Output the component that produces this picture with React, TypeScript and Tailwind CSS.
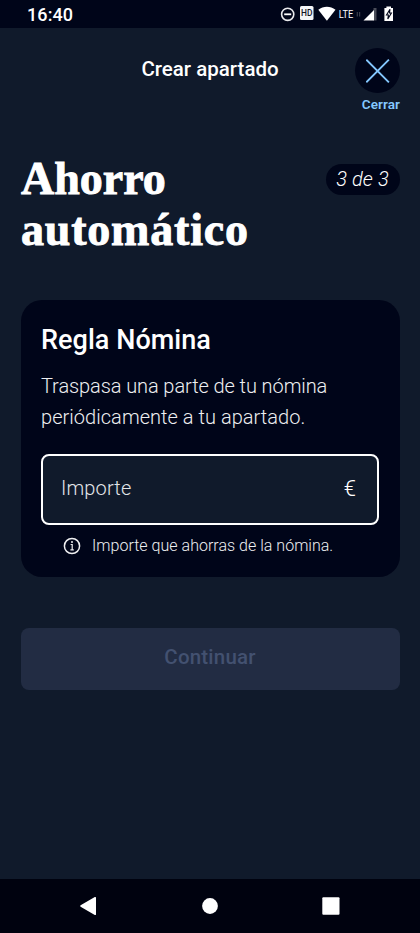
// App.tsx
import { useState } from 'react'

function StatusBar() {
  return (
    <div className="flex h-7 items-center justify-between bg-[#000519] pl-[27px] pr-[24px] text-white">
      <span className="text-[18px] leading-7 font-medium tracking-[0.1px] pt-px">16:40</span>
      <svg width="116" height="28" viewBox="280 0 116 28" fill="none">
        <circle cx="287.7" cy="14.3" r="6.1" stroke="#e8e9ec" strokeWidth="1.6" />
        <path d="M284.2 14.3h7" stroke="#fff" strokeWidth="1.8" />
        <rect x="300" y="6" width="13.5" height="14" rx="1.5" fill="#f4f5f7" />
        <text x="306.8" y="16.2" textAnchor="middle" fontSize="9" fontWeight="500" fill="#10141f" textLength="11.4" lengthAdjust="spacingAndGlyphs">HD</text>
        <path d="M318.3 9.7c5-3.9 12.2-3.9 17.2 0l-8.6 11z" fill="#fff" />
        <text x="338.8" y="18.3" fontSize="11.5" fill="#fff" textLength="14.5" lengthAdjust="spacingAndGlyphs">LTE</text>
        <path d="M357.3 12v4.5M359.6 12v4.5" stroke="#3a3d4b" strokeWidth="1.2" />
        <path d="M373.5 8h3v12.5h-3z" fill="#4a4d59" />
        <path d="M363.5 20.5L374 10V20.5z" fill="#fff" />
        <path d="M386.4 6.4h4.6v1.500h2v13h-8.600v-13h2z" fill="#fff" />
        <path d="M390 9.2l-3.500 5.800h1.900l-.6 4 3.600-6h-1.900z" stroke="#000519" strokeWidth="1.1" />
      </svg>
    </div>
  )
}

function Header() {
  return (
    <header className="grid grid-cols-[100px_1fr_100px] px-5 pt-5 text-white">
      <span />
      <h1 className="pt-[7px] text-center text-[20.5px] leading-7 font-medium whitespace-nowrap">
        Crear apartado
      </h1>
      <button className="flex flex-col items-end">
        <span className="flex size-[45px] items-center justify-center rounded-full bg-[#000519]">
          <svg width="24" height="24" viewBox="0 0 24 24" fill="none" stroke="#85c8ff" strokeWidth="1.9">
            <path d="M0.3 0.7l22.6 22.6M22.9 0.7L0.3 23.3" />
          </svg>
        </span>
        <span className="pt-px text-[13.5px] leading-5 font-semibold tracking-[0.1px] text-[#85c8ff]">Cerrar</span>
      </button>
    </header>
  )
}

function NavBar() {
  return (
    <nav className="flex h-[54px] justify-center bg-[#00020f]">
      <svg width="420" height="54" viewBox="0 879 420 54" fill="#fff">
        <path d="M80.6 905.2l14.2-8.1q1.2-.5 1.2.7v16.4q0 1.2-1.2.7l-14.2-8.1q-1-.8 0-1.6z" />
        <circle cx="210" cy="906" r="7.9" />
        <rect x="322.3" y="897.3" width="17.2" height="17.4" rx="1" />
      </svg>
    </nav>
  )
}

export default function App() {
  const [amount, setAmount] = useState('')

  return (
    <div className="mx-auto flex h-[933px] w-[420px] flex-col bg-[#101a2b] font-['Roboto','Liberation_Sans',sans-serif]">
      <StatusBar />
      <Header />

      <main className="flex-1 px-[20.5px] pt-[39px]">
        <div className="flex items-start justify-between text-white">
          <h2 className="pl-[0.5px] font-['Liberation_Serif',serif] text-[46px] leading-[51px] font-bold [-webkit-text-stroke:0.9px_white]">
            <span className="block">Ahorro</span>
            <span className="block tracking-[0.8px]">automático</span>
          </h2>
          <span className="mt-[11px] flex h-[31px] w-[74px] items-center justify-center rounded-full bg-[#000519] pb-px text-[20px] leading-none font-light tracking-[0.1px] italic">
            3 de 3
          </span>
        </div>

        <section className="mt-[45px] h-[277px] rounded-[21px] bg-[#000519] px-[20.5px] pt-[24px] text-white">
          <h3 className="text-[27px] leading-8 font-medium tracking-[0.05px]">Regla Nómina</h3>
          <p className="mt-[15px] text-[20px] leading-[31px] font-light whitespace-nowrap text-[#eeeff1]">
            <span className="block tracking-[-0.09px]">Traspasa una parte de tu nómina</span>
            <span className="block tracking-[0.04px]">periódicamente a tu apartado.</span>
          </p>
          <label className="mt-[21px] flex h-[71px] items-center justify-between rounded-[8px] border-2 border-white bg-[#101a2b] pr-[21px] pl-[18px] text-[20px] font-light">
            <input
              className="w-40 bg-transparent pb-[3px] tracking-[0.15px] outline-none placeholder:text-[#e3e5e9] placeholder:opacity-100"
              placeholder="Importe"
              value={amount}
              onChange={(e) => setAmount(e.target.value)}
            />
            <span className="pb-[3px] text-[22px]">€</span>
          </label>
          <div className="mt-[9px] flex items-center pl-[22px]">
            <svg width="18" height="24" viewBox="0 0 18 24" fill="none" stroke="#eeeff1">
              <circle cx="9" cy="12" r="7.6" strokeWidth="1.5" />
              <path d="M7.6 10.5h1.6v5.300M7.400 15.900h3.400" strokeWidth="1.2" />
              <circle cx="9" cy="8" r="1" fill="#eeeff1" stroke="none" />
            </svg>
            <span className="pl-[11px] text-[16px] leading-6 font-light tracking-[0.02px] whitespace-nowrap text-[#eeeff1]">
              Importe que ahorras de la nómina.
            </span>
          </div>
        </section>

        <button
          disabled
          className="mt-[51px] flex h-[62px] w-full items-center justify-center rounded-[8px] bg-[#222c43] pb-[3px] text-[20.5px] font-medium tracking-[0.2px] text-[#435170]"
        >
          Continuar
        </button>
      </main>

      <NavBar />
    </div>
  )
}
